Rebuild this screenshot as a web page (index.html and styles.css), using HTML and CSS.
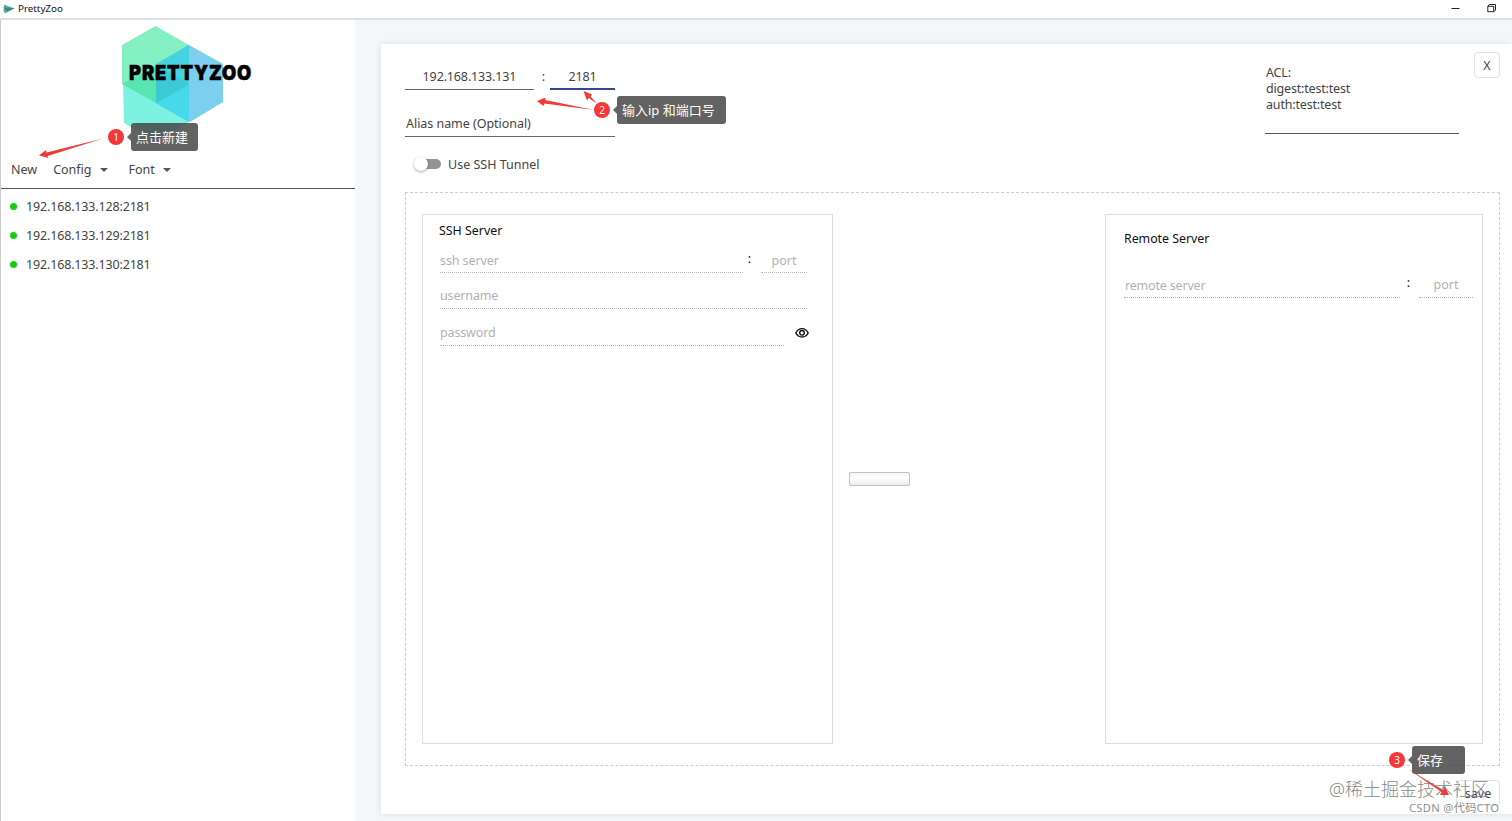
FILE: index.html
```
<!DOCTYPE html>
<html lang="en">
<head>
    <meta charset="UTF-8">
    <meta name="viewport" content="width=device-width, initial-scale=1.0">
    <title>PrettyZoo</title>
    <link rel="stylesheet" href="styles.css">
</head>
<body>
    <header class="titlebar">
        <svg class="app-icon" width="12" height="10" viewBox="0 0 12 10">
            <path d="M1 0.5L11.5 4.5L2 9.5L0.5 7Z" fill="#55b5a5"/>
            <path d="M0.5 3.5L11.5 4L4 7.5Z" fill="#43808a"/>
        </svg>
        <span class="app-title">PrettyZoo</span>
        <svg class="window-buttons" width="48" height="12" viewBox="0 0 48 12" fill="none" stroke="#222" stroke-width="1">
            <path d="M0.5 6.5H8.5"/>
            <path d="M36.8 4.3H42.7V9.7H36.8Z"/>
            <path d="M36.8 4.3L38.3 2.5H44.5V8.3L42.7 9.7"/>
        </svg>
    </header>

    <div class="app">
        <aside class="sidebar">
            <div class="logo">
                <svg width="140" height="110" viewBox="0 0 140 110">
                    <path d="M12 58L45 76L78 96L45 115L13 97Z" fill="#7df2e0"/>
                    <path d="M44.5 0L78 19V58L45 77L11 58V19Z" fill="#84efc0"/>
                    <path d="M78 19L112 38V76L79 96L45 77V38Z" fill="#7dcff0"/>
                    <path d="M11 58L45 40V77Z" fill="#58e5b2"/>
                    <path d="M78 19V96L45 77V38Z" fill="#47d2e2"/>
                    <path d="M45 38L78 58L45 77Z" fill="#3bc9d6"/>
                    <path d="M45 77L78 60V96Z" fill="#47d8eb"/>
                    <text class="logo-text" transform="translate(18 53.5) scale(0.92 1)" textLength="133">PRETTYZOO</text>
                </svg>
            </div>
            <nav class="menu">
                <span class="menu-new">New</span>
                <span class="menu-config">Config<i class="caret"></i></span>
                <span class="menu-font">Font<i class="caret"></i></span>
            </nav>
            <ul class="servers">
                <li>192.168.133.128:2181</li>
                <li>192.168.133.129:2181</li>
                <li>192.168.133.130:2181</li>
            </ul>
        </aside>

        <main class="content">
            <section class="card">
                <div class="top">
                    <div class="connection">
                        <div class="row">
                            <div class="field host">192.168.133.131</div>
                            <span class="colon">:</span>
                            <div class="field host-port">2181</div>
                        </div>
                        <div class="field alias">Alias name (Optional)</div>
                        <div class="tunnel">
                            <span class="switch"></span>
                            <span class="tunnel-label">Use SSH Tunnel</span>
                        </div>
                    </div>
                    <div class="acl">ACL:<br>digest:test:test<br>auth:test:test</div>
                    <div class="close">X</div>
                </div>

                <div class="tunnel-box">
                    <div class="panel ssh">
                        <h3>SSH Server</h3>
                        <div class="row">
                            <div class="input ssh-host">ssh server</div>
                            <span class="colon">:</span>
                            <div class="input ssh-port">port</div>
                        </div>
                        <div class="input username">username</div>
                        <div class="row">
                            <div class="input password">password</div>
                            <svg class="eye" width="14" height="12" viewBox="0 0 14 12" fill="none" stroke="#111" stroke-width="1.4">
                                <path d="M0.8 6C3.6 0.2 10.4 0.2 13.2 6C10.4 11.3 3.6 11.3 0.8 6Z"/>
                                <circle cx="7" cy="5.8" r="2.3"/>
                            </svg>
                        </div>
                    </div>
                    <div class="progress"></div>
                    <div class="panel remote">
                        <h3>Remote Server</h3>
                        <div class="row">
                            <div class="input remote-host">remote server</div>
                            <span class="colon">:</span>
                            <div class="input remote-port">port</div>
                        </div>
                    </div>
                </div>

                <div class="actions">
                    <div class="save">save</div>
                </div>
            </section>
        </main>
    </div>

    <!-- step notes over the window -->
    <div class="step step-1"><b>1</b><span>点击新建</span></div>
    <div class="step step-2"><b>2</b><span>输入ip 和端口号</span></div>
    <div class="step step-3"><b>3</b><span>保存</span></div>
    <div class="watermark">@稀土掘金技术社区</div>
    <div class="watermark-small">CSDN @代码CTO</div>
    <svg class="arrows" width="1512" height="821" viewBox="0 0 1512 821" fill="#f03a3a">
        <path d="M103 138.5L47.5 156L48.5 158L39 155.5L46 150L46.5 152.5Z"/>
        <path d="M594 110L544.5 103.5L543.5 106L537 101L545.5 97.5L545 100Z"/>
        <path d="M597 103.5L588.5 98L587 100.5L583.5 91L592 94.5L590.5 96.5Z"/>
        <path d="M1408 769L1441.5 792L1440 795L1449 795L1445 787L1443 790Z"/>
    </svg>
</body>
</html>
```
FILE: styles.css
```
* {
    box-sizing: border-box;
}

body {
    margin: 0;
    height: 821px;
    overflow: hidden;
    position: relative;
    display: flex;
    flex-direction: column;
    font-family: "Noto Sans", "Noto Sans CJK SC", sans-serif;
    font-size: 12.5px;
    line-height: 16px;
    color: #444;
    background: #fff;
}

.titlebar {
    height: 20px;
    flex: none;
    display: flex;
    align-items: center;
    padding: 0 13px 0 3px;
    border-bottom: 2px solid #dde0e2;
}

.app-title {
    margin-left: 3px;
    font-size: 9.8px;
    color: #111;
}

.window-buttons {
    margin: 0 0 2px auto;
}

.app {
    flex: 1;
    display: flex;
    min-height: 0;
}

.sidebar {
    width: 355px;
    flex: none;
    border-left: 1px solid #ccc;
    background: #fff;
}

.logo {
    height: 130px;
    padding: 6px 0 0 110px;
}

.logo svg {
    display: block;
    overflow: visible;
}

.logo-text {
    font-family: Inter, sans-serif;
    font-size: 20px;
    font-weight: 900;
    fill: #000;
    stroke: #000;
    stroke-width: 0.5px;
}

.menu {
    height: 39px;
    display: flex;
    padding: 12px 0 0 10px;
    border-bottom: 1px solid #555;
}

.menu-config {
    margin-left: 16px;
}

.menu-font {
    margin-left: 21px;
}

.caret {
    display: inline-block;
    margin-left: 8px;
    vertical-align: 2px;
    border: 4px solid transparent;
    border-top-color: #555;
    border-bottom: 0;
}

.servers {
    list-style: none;
    margin: 0;
    padding: 3px 0 0 9px;
    letter-spacing: -0.16px;
}

.servers li {
    height: 29px;
    display: flex;
    align-items: center;
}

.servers li::before {
    content: "";
    width: 7px;
    height: 7px;
    margin: 0 9px 1px 0;
    border-radius: 50%;
    background: #14cc14;
}

.content {
    flex: 1;
    padding: 24px 0 7px 26px;
    background: #f3f7f9;
}

.card {
    height: 770px;
    padding: 8px 12px 0 24px;
    background: #fff;
    box-shadow: 0 0 7px rgba(0, 0, 0, 0.1);
}

.top {
    height: 140px;
    display: flex;
}

.row {
    display: flex;
}

.connection {
    width: 210px;
    padding-top: 13px;
}

.field {
    border-bottom: 1px solid #666;
}

.host {
    width: 129px;
    height: 25px;
    padding-top: 4px;
    text-align: center;
    letter-spacing: -0.14px;
}

.host-port {
    width: 65px;
    height: 25px;
    padding-top: 4px;
    text-align: center;
    letter-spacing: -0.14px;
    border-bottom: 2px solid #34478f;
}

.connection .colon {
    width: 16px;
    padding: 4px 0 0 3px;
    text-align: center;
}

.alias {
    height: 47px;
    padding: 26px 0 0 1px;
    letter-spacing: -0.04px;
}

.tunnel {
    display: flex;
    align-items: center;
    height: 16px;
    margin: 19px 0 0 10px;
}

.switch {
    display: flex;
    align-items: center;
    width: 24px;
    height: 10px;
    margin-left: 2px;
    border-radius: 5px;
    background: #939393;
}

.switch::before {
    content: "";
    width: 14px;
    height: 14px;
    flex: none;
    margin-left: -3px;
    border-radius: 50%;
    background: #fff;
    box-shadow: 0 1px 3px rgba(0, 0, 0, 0.35);
}

.tunnel-label {
    margin-left: 7px;
    padding-top: 1px;
    white-space: nowrap;
}

.acl {
    width: 194px;
    height: 70px;
    margin: 12px 15px 0 auto;
    padding: 1px 0 0 1px;
    letter-spacing: -0.18px;
    border-bottom: 1px solid #555;
}

.close {
    width: 26px;
    height: 26px;
    line-height: 25px;
    text-align: center;
    border: 1px solid #e2e2e2;
    border-radius: 4px;
}

.tunnel-box {
    height: 574px;
    display: flex;
    align-items: flex-start;
    padding: 21px 16px 0;
    border: 1px dashed #ccc;
}

.panel {
    height: 530px;
    border: 1px solid #ddd;
}

.panel h3 {
    margin: 0;
    font-size: 12.4px;
    line-height: 16px;
    font-weight: normal;
    color: #111;
}

.panel .colon {
    width: 17px;
    text-align: center;
    color: #111;
}

.input {
    color: #b2b2b2;
    border-bottom: 1px dotted #b5b5b5;
}

.ssh {
    width: 411px;
    padding: 8px 23px 0 17px;
}

.ssh h3 {
    margin-left: -1px;
}

.ssh-host {
    width: 303px;
    height: 34px;
    padding-top: 14px;
    letter-spacing: -0.1px;
}

.ssh .colon {
    width: 13px;
    padding-top: 12px;
}

.ssh-port {
    width: 46px;
    height: 34px;
    margin-left: 5px;
    padding-top: 14px;
    text-align: center;
}

.username {
    width: 367px;
    height: 36px;
    padding-top: 15px;
}

.username,
.password {
    letter-spacing: -0.15px;
}

.password {
    width: 344px;
    height: 37px;
    padding-top: 16px;
}

.eye {
    flex: none;
    margin: 18px 0 0 11px;
}

.progress {
    width: 61px;
    height: 14px;
    margin: 258px 0 0 16px;
    border: 1px solid #c2c2c2;
    border-radius: 2px;
    background: linear-gradient(#f6f6f6, #fff 40%, #ededed);
}

.remote {
    width: 378px;
    margin-left: auto;
    padding: 16px 8px 0 18px;
}

.remote h3 {
    letter-spacing: -0.04px;
}

.remote-host {
    width: 276px;
    height: 51px;
    padding: 31px 0 0 1px;
    letter-spacing: -0.18px;
}

.remote .colon {
    padding-top: 28px;
}

.remote-port {
    width: 54px;
    height: 51px;
    margin-left: 2px;
    padding-top: 30px;
    text-align: center;
}

.actions {
    display: flex;
    justify-content: flex-end;
    padding-top: 14px;
}

.save {
    width: 44px;
    height: 26px;
    line-height: 26px;
    text-align: center;
    border: 1px solid #e4e4e4;
    border-radius: 4px;
}

.step {
    position: absolute;
    display: flex;
    align-items: center;
    color: #fff;
}

.step b {
    width: 16px;
    height: 16px;
    border-radius: 50%;
    background: #f73639;
    font-size: 10px;
    font-weight: normal;
    text-align: center;
}

.step span {
    position: relative;
    height: 28px;
    margin-left: 7px;
    padding-left: 5px;
    border-radius: 3px;
    background: rgba(70, 70, 70, 0.85);
    font-size: 13px;
    line-height: 28px;
    white-space: nowrap;
}

.step span::before {
    content: "";
    position: absolute;
    left: -4px;
    top: 10px;
    border: 4px solid transparent;
    border-left: 0;
    border-right-color: #666;
}

.step-1 {
    left: 108px;
    top: 123px;
}

.step-1 span {
    width: 67px;
}

.step-2 {
    left: 594px;
    top: 96px;
}

.step-2 span {
    width: 109px;
}

.step-3 {
    left: 1389px;
    top: 746px;
}

.step-3 span {
    width: 53px;
}

.watermark {
    position: absolute;
    left: 1329px;
    top: 777px;
    font-size: 18px;
    font-weight: 300;
    line-height: 24px;
    color: #8a8a8a;
    white-space: nowrap;
}

.watermark-small {
    position: absolute;
    left: 1409px;
    top: 800px;
    font-size: 11.2px;
    letter-spacing: 0.3px;
    color: #909090;
    white-space: nowrap;
}

.arrows {
    position: absolute;
    left: 0;
    top: 0;
}
```
